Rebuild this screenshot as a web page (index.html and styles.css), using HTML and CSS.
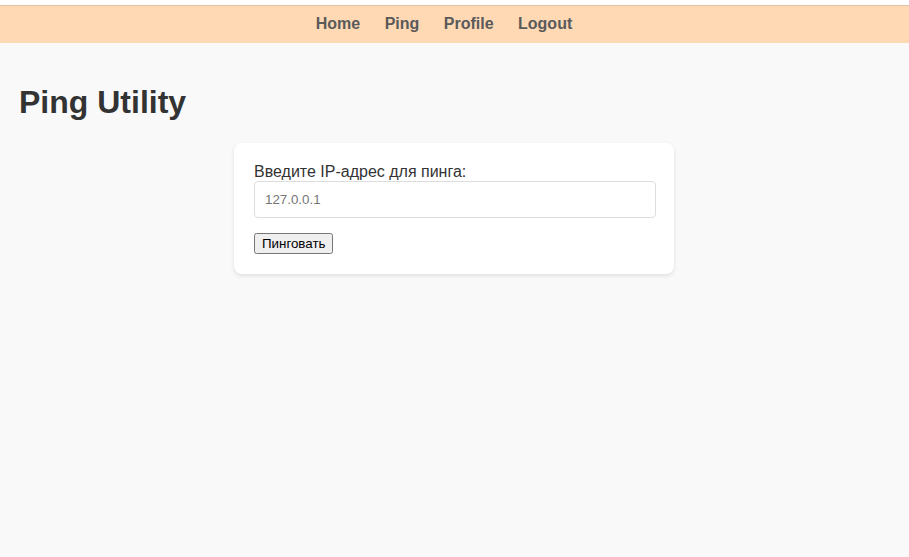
FILE: index.html
```html
<!DOCTYPE html>
<html lang="ru">
<head>
<meta charset="utf-8">
<title>Ping Utility</title>
<link rel="stylesheet" href="styles.css">
</head>
<body>
<header class="topbar">
  <nav>
    <ul class="menu">
      <li><a href="#">Home</a></li>
      <li><a href="#">Ping</a></li>
      <li><a href="#">Profile</a></li>
      <li><a href="#">Logout</a></li>
    </ul>
  </nav>
</header>
<main class="content">
  <h1>Ping Utility</h1>
  <form class="card">
    <label for="ip">Введите IP-адрес для пинга:</label>
    <input type="text" id="ip" name="ip" placeholder="127.0.0.1">
    <button type="submit">Пинговать</button>
  </form>
</main>
</body>
</html>
```
FILE: styles.css
```css
html {
  background: #f9f9f9;
}

body {
  margin: 0;
  font-family: Arial, "Liberation Sans", sans-serif;
  color: #333;
}

.topbar {
  border-top: 5px solid #fff;
}

.menu {
  margin: 0;
  padding: 9px 1px 10px 0;
  border-top: 1px solid #e0c2a4;
  background: #ffd8b4;
  text-align: center;
  list-style: none;
}

.menu li {
  display: inline-block;
  margin-right: 20px;
}

.menu a {
  color: #5a5a5a;
  font-weight: bold;
  text-decoration: none;
}

.content {
  padding: 20px 20px 20px 19px;
}

h1 {
  margin: 21px 0 22px;
  font-size: 32px;
}

.card {
  max-width: 400px;
  margin: 0 auto;
  padding: 20px;
  border-radius: 8px;
  background: #fff;
  box-shadow: 0 2px 4px rgba(0, 0, 0, 0.1);
}

.card input {
  width: calc(100% - 20px);
  margin: 0 0 15px;
  padding: 10px;
  border: 1px solid #ddd;
  border-radius: 4px;
}

.card button {
  display: block;
}
```
